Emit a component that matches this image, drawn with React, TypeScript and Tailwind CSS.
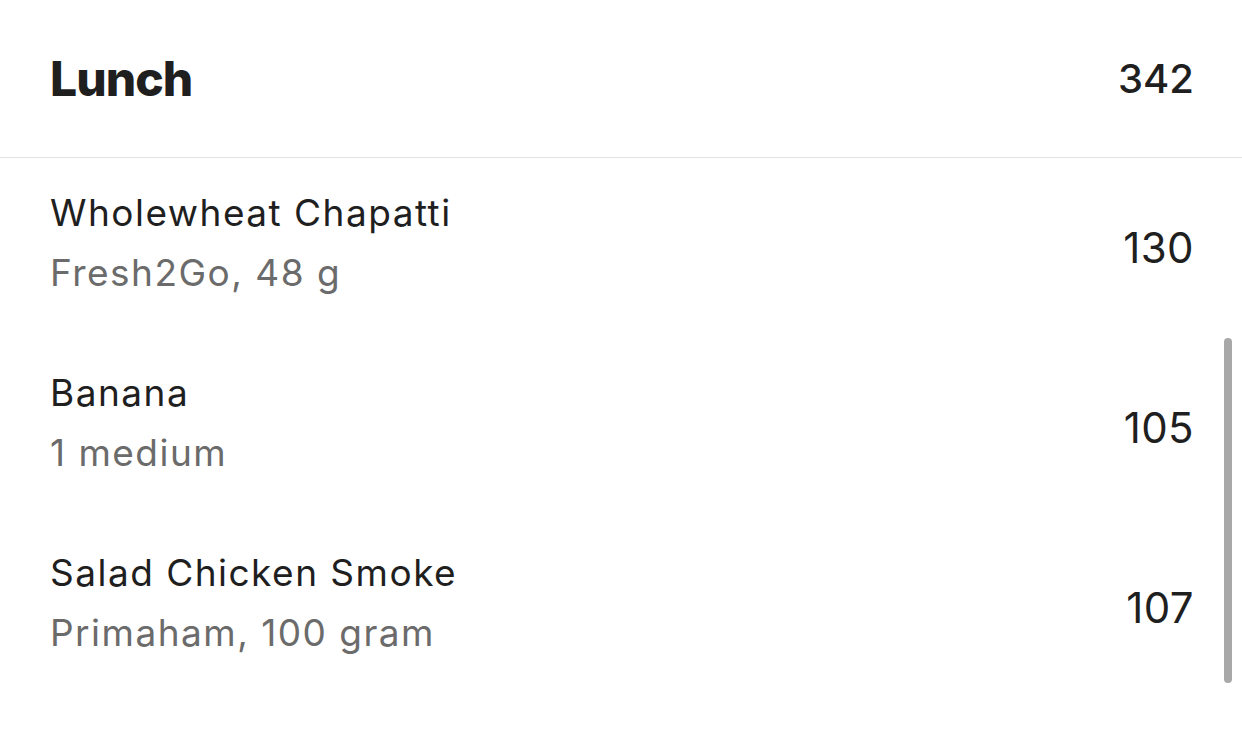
import React from "react";

const items = [
  { name: "Wholewheat Chapatti", detail: "Fresh2Go, 48 g", kcal: 130 },
  { name: "Banana", detail: "1 medium", kcal: 105 },
  { name: "Salad Chicken Smoke", detail: "Primaham, 100 gram", kcal: 107 },
];

const App: React.FC = () => {
  return (
    <div className="relative w-[1242px] h-[737px] overflow-hidden bg-white font-['Inter',sans-serif] text-[#1f1f1f]">
      {/* Meal header */}
      <div className="flex items-center justify-between h-[158px] pl-[50px] pr-[48px] border-b border-[#e3e3e3]">
        <h2 className="text-[48px] font-extrabold leading-none tracking-[-0.02em]">Lunch</h2>
        <span className="text-[40px] font-medium leading-none">342</span>
      </div>

      {/* Food rows */}
      {items.map((item) => (
        <div key={item.name} className="flex items-center justify-between h-[180px] pl-[50px] pr-[48px]">
          <div className="flex flex-col -mt-[10px]">
            <p className="text-[37px] leading-[40px] tracking-[0.04em]">{item.name}</p>
            <p className="mt-[20px] text-[37px] leading-[40px] tracking-[0.04em] text-[#6b6b6b]">
              {item.detail}
            </p>
          </div>
          <span className="text-[42px] leading-none tracking-[0.01em]">{item.kcal}</span>
        </div>
      ))}

      {/* Scroll indicator */}
      <div className="absolute left-[1224px] top-[338px] w-[8px] h-[345px] rounded-full bg-[#a8a8a8]" />
    </div>
  );
};

export default App;
